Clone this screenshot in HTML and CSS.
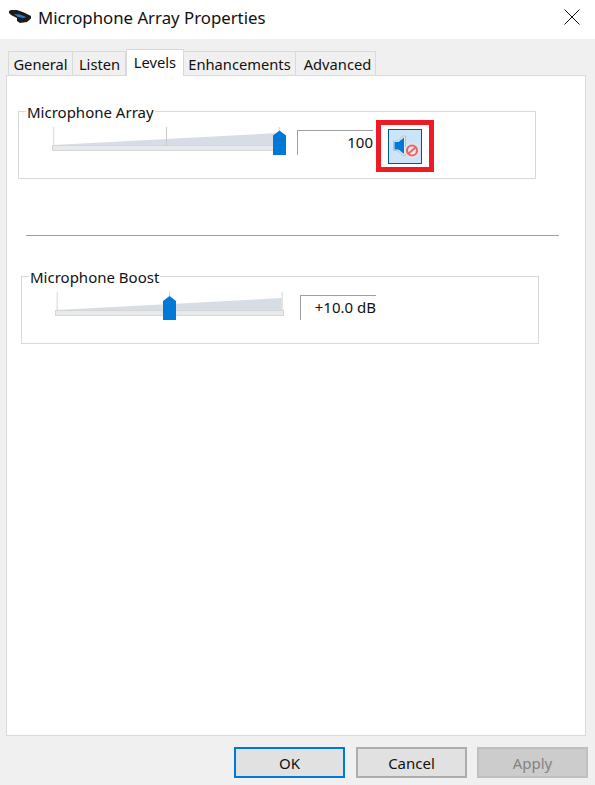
FILE: index.html
```html
<!DOCTYPE html>
<html lang="en">
<head>
  <meta charset="UTF-8">
  <title>Microphone Array Properties</title>
  <link rel="stylesheet" href="styles.css">
</head>
<body>
  <div class="dialog">
    <!-- Title bar -->
    <div class="titlebar">
      <svg class="app-icon" width="24" height="16" viewBox="0 0 24 16">
        <path d="M1 2 L3 1 L9 1 L16 3.500 L23 7 L23 9.500 L19 13 L12 14 L9 12 L9 9 L3 6 L1 4 Z" fill="#1c1c1c"/>
        <path d="M6 5 L12 5.500 L18 8 L16 9 L10 8 Z" fill="#2a7fc9"/>
      </svg>
      <span class="title">Microphone Array Properties</span>
      <svg class="close" width="16" height="16" viewBox="0 0 16 16">
        <path d="M0.500 0.500 L15.500 15.500 M15.500 0.500 L0.500 15.500" stroke="#111" stroke-width="1" fill="none"/>
      </svg>
    </div>

    <div class="content">
      <!-- Tabs -->
      <div class="tabs">
        <div class="tab tab-general">General</div>
        <div class="tab tab-listen">Listen</div>
        <div class="tab tab-levels active">Levels</div>
        <div class="tab tab-enhancements">Enhancements</div>
        <div class="tab tab-advanced">Advanced</div>
      </div>

      <!-- Levels panel -->
      <div class="panel">
        <fieldset class="group group-array">
          <legend>Microphone Array</legend>
          <div class="group-row">
            <svg class="slider" width="237" height="30" viewBox="0 0 237 30">
              <path d="M1.500 18 L227 6 L227 18 Z" fill="#d6dde4"/>
              <rect x="0.800" y="0" width="1.500" height="18" fill="#e3e3e3"/>
              <rect x="114" y="0" width="1" height="18" fill="#c9c9c9"/>
              <rect x="226.500" y="0" width="1.500" height="18" fill="#e3e3e3"/>
              <rect x="0.500" y="18.500" width="230" height="5" fill="#e7eaea" stroke="#d6d6d6"/>
              <path d="M221 28 L221 8.500 L227.500 3.500 L234 8.500 L234 28 Z" fill="#0078d7"/>
            </svg>
            <div class="value value-array">100</div>
            <div class="mute-mark">
              <button class="mute" type="button">
                <svg width="28" height="28" viewBox="0 0 28 28">
                  <path d="M2.500 9 L6.500 9 L12 4 L14.500 4 L14.500 23.500 L12 23.500 L6.500 18.500 L2.500 18.500 Z" fill="#e2ecf5" stroke="#b3c2d0"/>
                  <path d="M3.500 10 L7.500 10 L13 5.500 L13 22 L7.500 17.500 L3.500 17.500 Z" fill="#0078d7"/>
                  <circle cx="21" cy="18.500" r="7.500" fill="#e9e4e6"/>
                  <circle cx="21" cy="18.500" r="5" fill="#fbeaea" stroke="#e06a6c" stroke-width="2.200"/>
                  <path d="M17.500 21.500 L24.500 15.500" stroke="#e06a6c" stroke-width="2.200"/>
                </svg>
              </button>
            </div>
          </div>
        </fieldset>

        <div class="separator"></div>

        <fieldset class="group group-boost">
          <legend>Microphone Boost</legend>
          <div class="group-row">
            <svg class="slider" width="237" height="30" viewBox="0 0 237 30">
              <path d="M1.500 18 L227 6 L227 18 Z" fill="#d6dde4"/>
              <rect x="1.500" y="0" width="1.500" height="18" fill="#e3e3e3"/>
              <rect x="114" y="0" width="1" height="18" fill="#c9c9c9"/>
              <rect x="226.500" y="0" width="1.500" height="18" fill="#e3e3e3"/>
              <rect x="0.500" y="18.500" width="228" height="5" fill="#e7eaea" stroke="#d6d6d6"/>
              <path d="M108 28 L108 9 L114.500 4 L121 9 L121 28 Z" fill="#0078d7"/>
            </svg>
            <div class="value value-boost">+10.0 dB</div>
          </div>
        </fieldset>
      </div>

      <!-- Footer buttons -->
      <div class="footer">
        <button class="btn btn-default" type="button">OK</button>
        <button class="btn" type="button">Cancel</button>
        <button class="btn btn-disabled" type="button" disabled>Apply</button>
      </div>
    </div>
  </div>
</body>
</html>
```

FILE: styles.css
```css
/* Reset & Base */
* {
  box-sizing: border-box;
  margin: 0;
  padding: 0;
}

body {
  width: 595px;
  height: 785px;
  overflow: hidden;
  background: #fff;
  color: #111;
  font-family: "Noto Sans", "Open Sans", sans-serif;
  font-size: 15px;
}

/* Title bar */
.titlebar {
  height: 39px;
  display: flex;
  align-items: center;
  padding: 0 15px 5px 8px;
}

.app-icon {
  margin-right: 6px;
}

.title {
  font-size: 16.8px;
  flex: 1;
}

/* Content */
.content {
  height: 746px;
  background: #f0f0f0;
  padding: 10px 7px 0 6px;
}

/* Tabs */
.tabs {
  display: flex;
  height: 26px;
  padding-left: 2px;
  align-items: flex-end;
  position: relative;
  z-index: 1;
}

.tab {
  height: 24px;
  background: #f0f0f0;
  border: 1px solid #d9d9d9;
  border-bottom: none;
  border-left: none;
  font-size: 14.7px;
  text-align: center;
  line-height: 25px;
  white-space: nowrap;
}

.tab-general { width: 65px; border-left: 1px solid #d9d9d9; }
.tab-listen { width: 53px; padding-left: 1px; }
.tab-enhancements { width: 112px; }
.tab-advanced { width: 80px; padding-left: 4px; }

.tab.active {
  width: 58px;
  height: 27px;
  margin-bottom: -1px;
  background: #fff;
  border-left: 1px solid #d9d9d9;
  line-height: 24px;
}

/* Panel */
.panel {
  height: 661px;
  margin-right: 2px;
  background: #fff;
  border: 1px solid #d9d9d9;
  padding-top: 23px;
}

.group {
  width: 518px;
  height: 80px;
  border: 1px solid #d9d9d9;
  padding: 0;
}

.group legend {
  margin-left: 7px;
  padding: 3px 1px 1px;
  line-height: 20px;
}

.group-array { margin-left: 11px; }
.group-boost { margin-left: 14px; }

.group-row {
  display: flex;
  align-items: flex-start;
  height: 55px;
}

.slider {
  margin: 4px 0 0 33px;
  flex: none;
}

/* Value boxes */
.value {
  height: 25px;
  width: 76px;
  margin: 7px 0 0 8px;
  border-top: 1px solid #a0a0a0;
  border-left: 1px solid #a0a0a0;
  text-align: right;
  line-height: 22px;
  white-space: nowrap;
}

/* Mute button + red highlight */
.mute-mark {
  width: 58px;
  height: 52px;
  margin: -3px 0 0 3px;
  border: 5px solid #ed1c24;
  display: flex;
  justify-content: center;
  align-items: center;
  flex: none;
}

.mute {
  width: 34px;
  height: 35px;
  background: #cce4f7;
  border: 1px solid #005499;
  display: flex;
  align-items: center;
  justify-content: center;
}

.separator {
  height: 1px;
  background: #a0a0a0;
  margin: 56px 26px 28px 19px;
}

/* Footer */
.footer {
  display: flex;
  justify-content: flex-end;
  gap: 10px;
  margin-top: 11px;
}

.btn {
  width: 111px;
  height: 31px;
  background: #e1e1e1;
  border: 2px solid #adadad;
  font-family: inherit;
  font-size: inherit;
  color: #111;
}

.btn-default {
  margin-right: 1px;
  border-color: #0078d7;
}

.btn-disabled {
  background: #ccc;
  border-color: #bfbfbf;
  color: #838383;
}
```
